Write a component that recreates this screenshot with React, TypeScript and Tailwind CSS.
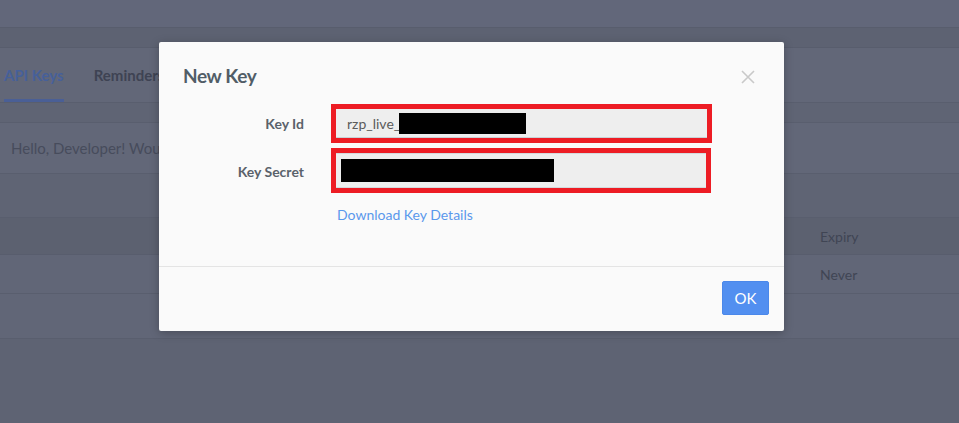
import React from 'react'

const Background: React.FC = () => {
  return (
    <div className="h-[423px] bg-[#5e6373] text-[#444958]">
      <div className="h-[28px] bg-[#62677a] border-b border-[#585d6d]" />
      <div className="h-[20px] bg-[#5d6272] border-b border-[#585d6d]" />
      <div className="h-[55px] bg-[#626778] border-b border-[#595e6e] flex items-end gap-[30px] pl-[4px]">
        <div className="h-full flex flex-col justify-between">
          <span className="pt-[16px] text-[15px] font-bold text-[#46609a]">API Keys</span>
          <span className="h-[3px] bg-[#4a5f96]" />
        </div>
        <span className="self-start pt-[16px] text-[15px] font-bold text-[#3e4353]">Reminders</span>
      </div>
      <div className="h-[20px] bg-[#5f6474] border-b border-[#595e6e]" />
      <div className="h-[51px] bg-[#626778] border-b border-[#595e6e] flex items-center pl-[11px] text-[15px] text-[#474c5c]">
        Hello, Developer! Would you like to generate a new key?
      </div>
      <div className="h-[44px] bg-[#5f6474] border-b border-[#595e6e]" />
      <div className="h-[37px] bg-[#5c6170] border-b border-[#585d6d] flex items-center pl-[820px] text-[14px] text-[#404554]">
        Expiry
      </div>
      <div className="h-[39px] bg-[#616677] border-b border-[#595e6e] flex items-center pl-[820px] text-[14px] text-[#404554]">
        Never
      </div>
      <div className="h-[45px] bg-[#616677] border-b border-[#595e6e]" />
    </div>
  )
}

const CloseIcon: React.FC = () => (
  <svg width="14" height="14" viewBox="0 0 14 14" className="text-[#c9c9c9]">
    <path d="M1 1 L13 13 M13 1 L1 13" stroke="currentColor" strokeWidth="1.6" />
  </svg>
)

const NewKeyModal: React.FC = () => {
  return (
    <div className="absolute left-[159px] top-[42px] w-[625px] h-[289px] bg-[#fafafa] rounded-[2px] shadow-[0_2px_10px_rgba(0,0,0,0.25)] flex flex-col">
      <div className="flex items-start justify-between pl-[24px] pr-[29px] pt-[22px]">
        <h2 className="text-[19px] font-bold tracking-[-0.4px] text-[#515d67] leading-[24px]">New Key</h2>
        <button className="mt-[6px]">
          <CloseIcon />
        </button>
      </div>

      <div className="flex flex-col pt-[16px]">
        <div className="flex items-center">
          <span className="w-[145px] text-right text-[14px] font-bold text-[#5a626b]">Key Id</span>
          <div className="ml-[27px] w-[381px] border-[5px] border-[#ed1c24]">
            <div className="h-[29px] bg-[#eeeeee] border-b border-[#c8d2d6] flex items-center pl-[11px] text-[14px] text-[#5b5b5b]">
              <span>rzp_live_</span>
              <span className="ml-[-1px] w-[127px] h-[21px] bg-black" />
            </div>
          </div>
        </div>

        <div className="flex items-center mt-[5px]">
          <span className="w-[145px] text-right text-[14px] font-bold text-[#5a626b] mt-[1px]">Key Secret</span>
          <div className="ml-[27px] w-[380px] border-[5px] border-[#ed1c24]">
            <div className="h-[35px] bg-[#eeeeee] border-t border-b border-[#d3dadd] flex items-center pl-[5px]">
              <span className="w-[213px] h-[23px] bg-black" />
            </div>
          </div>
        </div>

        <a href="#" className="ml-[178px] mt-[12px] text-[14px] text-[#5a98ec] leading-[20px] w-fit">
          Download Key Details
        </a>
      </div>

      <div className="mt-auto border-t border-[#e4e4e4] h-[65px] flex items-center justify-end pr-[15px]">
        <button className="w-[47px] h-[34px] bg-[#528ff0] border border-[#4b88ea] rounded-[2px] text-white text-[15px] mb-[2px]">
          OK
        </button>
      </div>
    </div>
  )
}

export default function App() {
  return (
    <div className="relative w-[959px] h-[423px] overflow-hidden font-['Lato','Open_Sans',sans-serif]">
      <Background />
      <NewKeyModal />
    </div>
  )
}
